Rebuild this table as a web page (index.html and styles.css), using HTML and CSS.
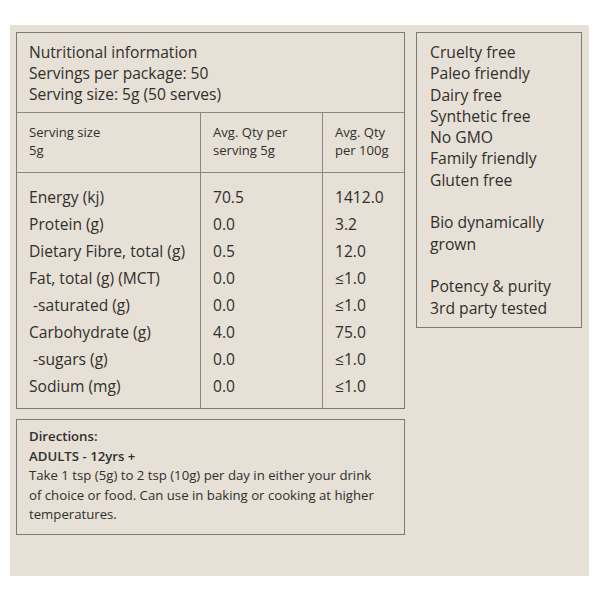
FILE: index.html
```html
<!DOCTYPE html>
<html lang="en">
<head>
<meta charset="utf-8">
<title>Nutritional information</title>
<link rel="stylesheet" href="styles.css">
</head>
<body>
<div class="panel">
  <div class="left">
    <div class="nutri">
      <div class="intro">
        <div>Nutritional information</div>
        <div>Servings per package: 50</div>
        <div>Serving size: 5g (50 serves)</div>
      </div>
      <div class="grid head">
        <div class="cell c1">Serving size<br>5g</div>
        <div class="cell c2">Avg. Qty per<br>serving 5g</div>
        <div class="cell c3">Avg. Qty<br>per 100g</div>
      </div>
      <div class="grid body-rows">
        <div class="cell c1">
          <div>Energy (kj)</div>
          <div>Protein (g)</div>
          <div>Dietary Fibre, total (g)</div>
          <div>Fat, total (g) (MCT)</div>
          <div>&nbsp;-saturated (g)</div>
          <div>Carbohydrate (g)</div>
          <div>&nbsp;-sugars (g)</div>
          <div>Sodium (mg)</div>
        </div>
        <div class="cell c2">
          <div>70.5</div>
          <div>0.0</div>
          <div>0.5</div>
          <div>0.0</div>
          <div>0.0</div>
          <div>4.0</div>
          <div>0.0</div>
          <div>0.0</div>
        </div>
        <div class="cell c3">
          <div>1412.0</div>
          <div>3.2</div>
          <div>12.0</div>
          <div>≤1.0</div>
          <div>≤1.0</div>
          <div>75.0</div>
          <div>≤1.0</div>
          <div>≤1.0</div>
        </div>
      </div>
    </div>
    <div class="directions">
      <div class="b">Directions:</div>
      <div class="b">ADULTS - 12yrs +</div>
      <div>Take 1 tsp (5g) to 2 tsp (10g) per day in either your drink of choice or food. Can use in baking or cooking at higher temperatures.</div>
    </div>
  </div>
  <div class="claims">
    <div>Cruelty free</div>
    <div>Paleo friendly</div>
    <div>Dairy free</div>
    <div>Synthetic free</div>
    <div>No GMO</div>
    <div>Family friendly</div>
    <div>Gluten free</div>
    <div class="gap">Bio dynamically<br>grown</div>
    <div class="gap">Potency &amp; purity<br>3rd party tested</div>
  </div>
</div>
</body>
</html>
```
FILE: styles.css
```css
html, body {
  margin: 0;
  padding: 0;
  background: #ffffff;
}
body {
  font-family: "Open Sans", "Noto Sans", sans-serif;
  color: #312f2c;
}
.panel {
  margin: 25px 0 0 10px;
  width: 579px;
  height: 551px;
  box-sizing: border-box;
  background: #e6e0d6;
  padding: 7px 0 0 6px;
  display: flex;
  align-items: flex-start;
  gap: 11px;
}
.left {
  width: 389px;
  display: flex;
  flex-direction: column;
  gap: 10px;
}
.nutri {
  border: 1px solid #7f7a72;
}
.intro {
  font-size: 15.6px;
  line-height: 21px;
  padding: 9px 12px 7px 12px;
  border-bottom: 1px solid #8c867c;
}
.grid {
  display: grid;
  grid-template-columns: 183px 122px 1fr;
}
.cell {
  padding-left: 12px;
}
.c2, .c3 {
  border-left: 1px solid #8c867c;
}
.head {
  font-size: 13.1px;
  line-height: 18px;
  border-bottom: 1px solid #8c867c;
}
.head .cell {
  padding-top: 10px;
  padding-bottom: 13px;
}
.body-rows {
  font-size: 15.6px;
  line-height: 27px;
}
.body-rows .cell {
  padding-top: 11px;
  padding-bottom: 8px;
}
.directions {
  border: 1px solid #7f7a72;
  font-size: 13.2px;
  line-height: 19.6px;
  padding: 7px 20px 9px 12px;
}
.b {
  font-weight: 600;
}
.claims {
  width: 166px;
  box-sizing: border-box;
  border: 1px solid #7f7a72;
  font-size: 15.7px;
  line-height: 21.3px;
  padding: 9px 8px 8px 13px;
}
.gap {
  margin-top: 21.3px;
}
```
